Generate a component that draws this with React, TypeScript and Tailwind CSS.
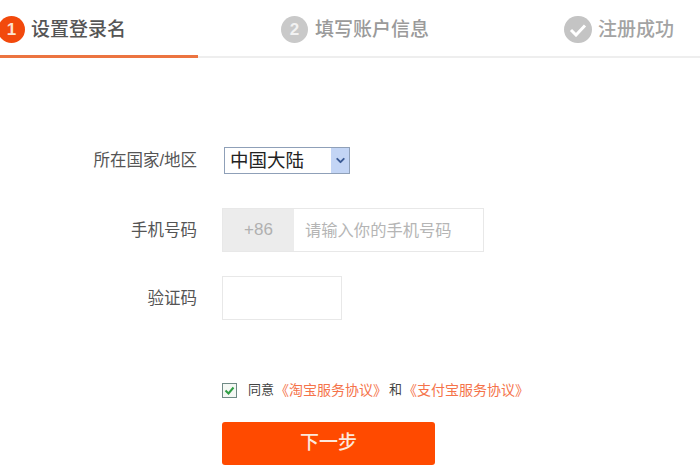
import { ChevronDown } from "lucide-react";

const font = { cjk: "font-['Liberation_Sans','Noto_Sans_CJK_SC',sans-serif]" };

const App = () => {
  return (
    <div className={`h-[470px] w-[700px] overflow-hidden bg-white ${font.cjk}`}>
      {/* steps */}
      <div className="flex h-[58px] border-b-2 border-[#eeeeee]">
        <div className="-mb-[2px] flex h-[58px] w-[198px] items-start border-b-[3px] border-[#ec7440] pt-[16px]">
          <span className="-ml-[2px] flex h-[27px] w-[27px] items-center justify-center rounded-full bg-[#f2490c] text-[17px] font-bold text-[#fde3d0]">
            1
          </span>
          <span className="ml-[6px] text-[19px] leading-[27px] font-medium text-[#555555]">
            设置登录名
          </span>
        </div>
        <div className="ml-[83px] flex items-start pt-[16px]">
          <span className="flex h-[27px] w-[27px] items-center justify-center rounded-full bg-[#c9c9c9] text-[17px] font-bold text-[#f2f2f2]">
            2
          </span>
          <span className="ml-[7px] text-[19px] leading-[27px] font-medium text-[#9a9a9a]">
            填写账户信息
          </span>
        </div>
        <div className="ml-[135px] flex items-start pt-[16px]">
          <span className="flex h-[27px] w-[28px] items-center justify-center rounded-full bg-[#c4c4c4]">
            <svg width="18" height="14" viewBox="0 0 18 14" fill="none">
              <path d="M2 7l5 5 9-9.5" stroke="#ffffff" strokeWidth="3" />
            </svg>
          </span>
          <span className="ml-[6px] text-[19px] leading-[27px] font-medium text-[#a3a3a3]">
            注册成功
          </span>
        </div>
      </div>

      {/* form */}
      <div className="flex flex-col pt-[89px]">
        <div className="flex h-[27px] items-center">
          <label className="w-[197px] text-right text-[16.5px] text-[#555555]">所在国家/地区</label>
          <div className="ml-[27px] flex h-[27px] w-[126px] items-center justify-between border border-[#8fa0b8] pl-[5px]">
            <span className="text-[18.5px] leading-[25px] text-[#222222]">中国大陆</span>
            <span className="flex h-[25px] w-[18px] items-center justify-center bg-[#c3d5f5]">
              <ChevronDown size={13} strokeWidth={3.5} className="text-[#3a5a94]" />
            </span>
          </div>
        </div>

        <div className="mt-[34px] flex h-[44px] items-center">
          <label className="w-[197px] text-right text-[16.5px] text-[#555555]">手机号码</label>
          <div className="ml-[25px] flex h-[44px] w-[262px] border border-[#e8e8e8]">
            <span className="flex w-[71px] items-center justify-center bg-[#ececec] text-[17px] text-[#b0b0b0]">
              +86
            </span>
            <span className="flex items-center pl-[11px] text-[16.3px] text-[#b5b5b5]">
              请输入你的手机号码
            </span>
          </div>
        </div>

        <div className="mt-[24px] flex h-[44px] items-center">
          <label className="w-[197px] text-right text-[16.5px] text-[#555555]">验证码</label>
          <div className="ml-[25px] h-[44px] w-[120px] border border-[#e8e8e8]" />
        </div>

        <div className="mt-[62px] ml-[222px] flex h-[16px] items-center">
          <span className="flex h-[15px] w-[15px] items-center justify-center border border-[#6f8a85] bg-[#f4f8f4]">
            <svg width="11" height="9" viewBox="0 0 11 9" fill="none">
              <path d="M1.5 4.5l3 3 5-6" stroke="#2f9e44" strokeWidth="2" />
            </svg>
          </span>
          <span className="ml-[11px] text-[13px] text-[#444444]">同意</span>
          <span className="ml-[1px] text-[14px] text-[#f5734a]">《淘宝服务协议》</span>
          <span className="ml-[2px] text-[13px] text-[#444444]">和</span>
          <span className="ml-[1px] text-[14px] text-[#f5734a]">《支付宝服务协议》</span>
        </div>

        <div className="mt-[24px] ml-[222px] flex h-[43px] w-[213px] items-center justify-center rounded-[3px] bg-[#ff4a00] text-[19px] font-medium text-[#fde8dc]">
          下一步
        </div>
      </div>
    </div>
  );
};

export default App;
